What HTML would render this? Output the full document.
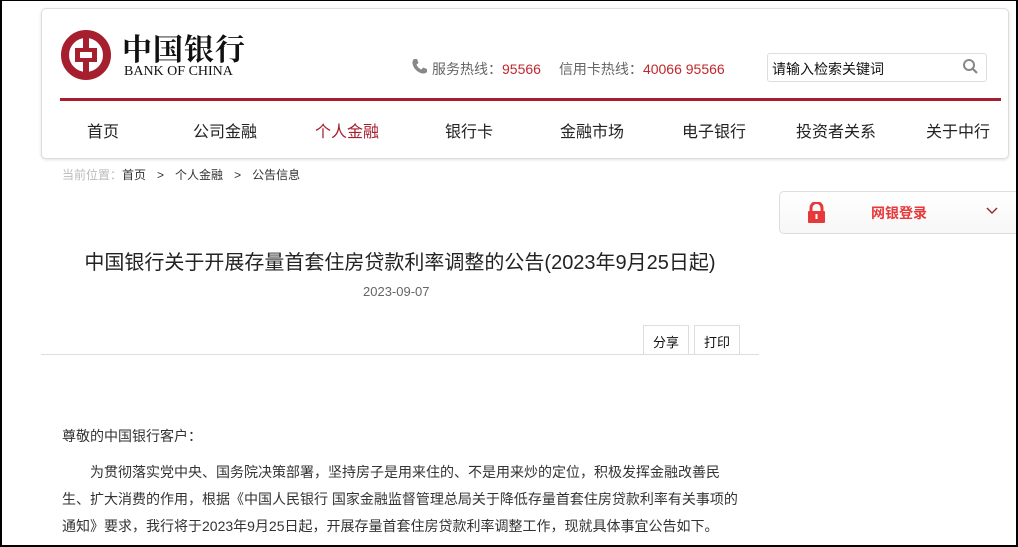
<!DOCTYPE html>
<html><head><meta charset="utf-8"><style>
*{margin:0;padding:0;box-sizing:border-box}
body{width:1018px;height:547px;overflow:hidden;background:#fff;font-family:"Liberation Sans","Noto Sans CJK SC",sans-serif;position:relative}
.frame{position:absolute;left:0;top:0;width:1018px;height:547px;border:2px solid #000;border-top-width:1px;pointer-events:none;z-index:10}
.hdr{position:absolute;left:41px;top:8px;width:968px;height:151px;border:1px solid #ddd;border-radius:5px;box-shadow:0 1px 3px rgba(0,0,0,.12);background:#fff}
.abs{position:absolute;white-space:nowrap}
.nav{font-size:16px;color:#222;top:118px}
</style></head><body>
<div class="hdr"></div>
<svg class="abs" style="left:60px;top:29px" width="52" height="52" viewBox="0 0 52 52">
<circle cx="26" cy="26" r="21" fill="none" stroke="#a51f2e" stroke-width="8"/>
<rect x="23" y="3" width="6" height="46" fill="#a51f2e"/>
<rect x="15" y="19" width="22" height="14" fill="#a51f2e"/>
<rect x="20" y="23" width="12" height="6" fill="#fff"/>
</svg>
<div class="abs" style="left:122px;top:25px;font-family:'Noto Serif CJK SC',serif;font-size:30px;font-weight:700;letter-spacing:1px;color:#111">中国银行</div>
<div class="abs" style="left:124px;top:64px;font-family:'Liberation Serif',serif;font-size:14px;color:#111">BANK OF CHINA</div>
<svg class="abs" style="left:411px;top:58px" width="17" height="17" viewBox="0 0 17 17"><path d="M3 1 L6 1 L7.5 5 L5.5 6.5 C6.5 9 8 10.5 10.5 11.5 L12 9.5 L16 11 L16 14 C14 16.5 9 16 5 12 C1 8 0.5 3 3 1Z" fill="#888"/></svg>
<div class="abs" style="left:432px;top:59px;font-size:14px;color:#666">服务热线：<span style="color:#c0272d">95566</span><span style="margin-left:18px">信用卡热线：</span><span style="color:#c0272d">40066 95566</span></div>
<div class="abs" style="left:767px;top:53px;width:220px;height:29px;border:1px solid #ddd;border-radius:3px;font-size:14px;color:#111;padding:5px 0 0 4px">请输入检索关键词</div>
<svg class="abs" style="left:962px;top:58px" width="17" height="17" viewBox="0 0 17 17"><circle cx="7" cy="7" r="5" fill="none" stroke="#888" stroke-width="2"/><path d="M10.5 10.5 L15 15" stroke="#888" stroke-width="2.2"/></svg>
<div class="abs" style="left:60px;top:98px;width:941px;height:3px;background:#a51f2e"></div>
<div class="abs nav" style="left:87px">首页</div>
<div class="abs nav" style="left:193px">公司金融</div>
<div class="abs nav" style="left:315px;color:#a51f2e">个人金融</div>
<div class="abs nav" style="left:445px">银行卡</div>
<div class="abs nav" style="left:560px">金融市场</div>
<div class="abs nav" style="left:682px">电子银行</div>
<div class="abs nav" style="left:796px">投资者关系</div>
<div class="abs nav" style="left:926px">关于中行</div>
<div class="abs" style="left:62px;top:166px;font-size:12px;color:#333"><span style="color:#bbb">当前位置：</span>首页<span style="margin:0 11px">&gt;</span>个人金融<span style="margin:0 11px">&gt;</span>公告信息</div>
<div class="abs" style="left:779px;top:191px;width:245px;height:43px;border:1px solid #ddd;border-radius:5px;background:linear-gradient(#fff,#f7f7f7)"></div>
<svg class="abs" style="left:807px;top:202px" width="19" height="21" viewBox="0 0 19 21"><path d="M4 9 V6 A5.5 5.5 0 0 1 15 6 V9" fill="none" stroke="#e8393a" stroke-width="3"/><rect x="1" y="9" width="17" height="12" rx="1" fill="#e8393a"/><rect x="8.5" y="12" width="2" height="5" fill="#fff"/></svg>
<div class="abs" style="left:871px;top:203px;font-size:14px;font-weight:bold;color:#e8393a">网银登录</div>
<svg class="abs" style="left:986px;top:207px" width="12" height="8" viewBox="0 0 12 8"><path d="M1 1 L6 6 L11 1" fill="none" stroke="#a51f2e" stroke-width="1.4"/></svg>
<div class="abs" style="left:0;width:800px;text-align:center;top:246px;font-size:20px;color:#222">中国银行关于开展存量首套住房贷款利率调整的公告(2023年9月25日起)</div>
<div class="abs" style="left:363px;top:284px;font-size:13px;color:#666">2023-09-07</div>
<div class="abs" style="left:41px;top:354px;width:718px;height:1px;background:#ddd"></div>
<div class="abs" style="left:643px;top:325px;width:46px;height:30px;border:1px solid #ddd;border-bottom:none;font-size:13px;text-align:center;padding-top:6px;color:#111">分享</div>
<div class="abs" style="left:694px;top:325px;width:46px;height:30px;border:1px solid #ddd;border-bottom:none;font-size:13px;text-align:center;padding-top:6px;color:#111">打印</div>
<div class="abs" style="left:62px;top:426px;font-size:14px;color:#333">尊敬的中国银行客户：</div>
<div class="abs" style="left:62px;top:459px;font-size:14px;color:#333;line-height:27px;white-space:normal;width:680px">　　为贯彻落实党中央、国务院决策部署，坚持房子是用来住的、不是用来炒的定位，积极发挥金融改善民生、扩大消费的作用，根据《中国人民银行 国家金融监督管理总局关于降低存量首套住房贷款利率有关事项的通知》要求，我行将于2023年9月25日起，开展存量首套住房贷款利率调整工作，现就具体事宜公告如下。</div>
<div class="frame"></div>
</body></html>
